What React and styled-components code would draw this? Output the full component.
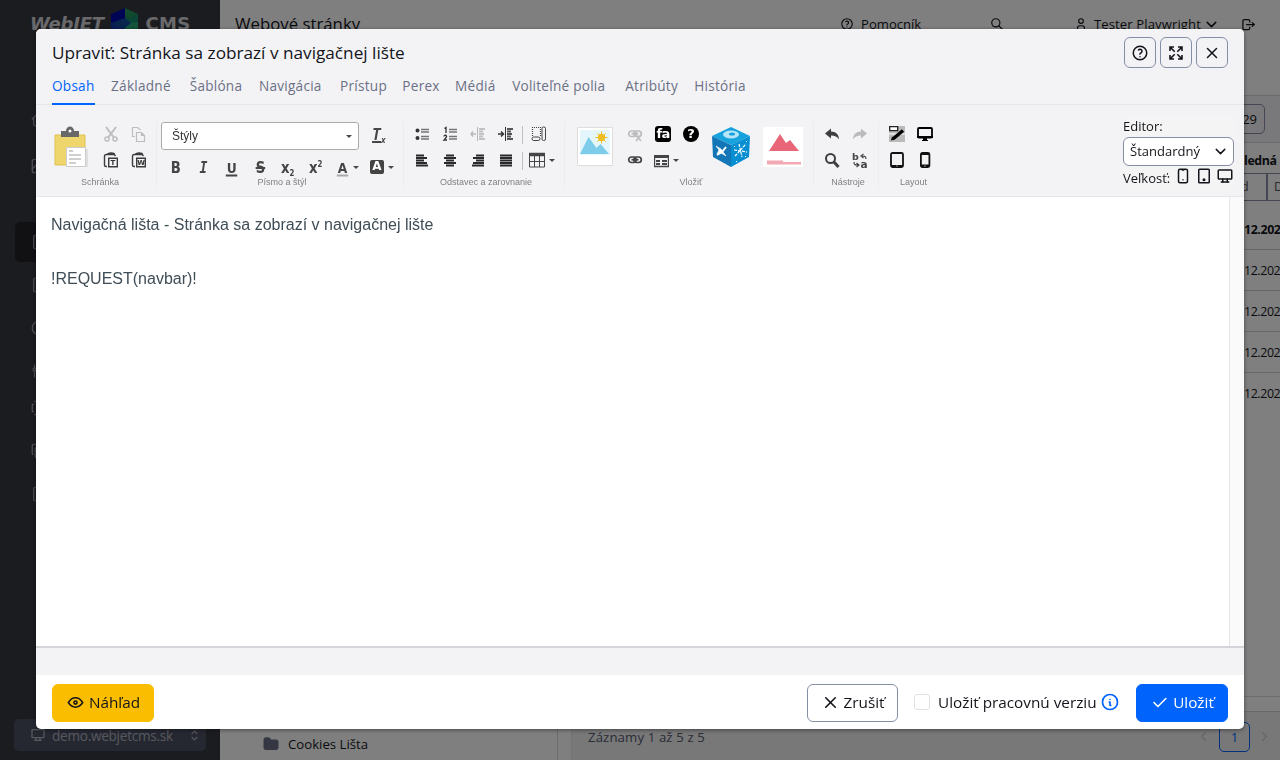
import React from 'react';
import styled, { createGlobalStyle, css } from 'styled-components';
import {
  TbHelp, TbSearch, TbUser, TbChevronDown, TbChevronLeft, TbChevronRight, TbLogout, TbHome, TbPhoto,
  TbFileText, TbDeviceTablet, TbDeviceMobile, TbDeviceDesktop, TbX, TbEye, TbCheck, TbInfoCircle,
  TbFolderFilled, TbSelector, TbForms, TbCopy, TbClock, TbAdjustments,
} from 'react-icons/tb';

const Global = createGlobalStyle`
  * { box-sizing: border-box; }
  body { margin: 0; overflow: hidden; background: #fff; color: #13151b;
    font-family: "Open Sans", "Noto Sans", sans-serif; font-size: 13.6px; }
  svg { display: block; flex: none; }
`;

const Page = styled.div`display: flex; width: 1280px; height: 760px; overflow: hidden;`;

const Sidebar = styled.aside`
  width: 220px; height: 760px; flex: none; background: #373941; color: #a3a6b3;
  display: flex; flex-direction: column;
`;
const Logo = styled.div`
  display: flex; height: 95px; padding: 8px 0 0 30px; align-items: flex-start; color: #d2d2d6;
`;
const LogoWord = styled.span`
  font: ${p => (p.$slant ? 'italic' : 'normal')} bold 18px/32px "DejaVu Sans", sans-serif;
  width: ${p => p.$w}px; white-space: nowrap; letter-spacing: ${p => p.$ls}px; margin-right: 8px;
`;
const SideList = styled.nav`flex: 1;`;
const SideItem = styled.div`
  display: flex; align-items: center; height: ${p => p.$h}px; margin: ${p => p.$mt}px 14px 0 15px; padding-left: 15px;
  border-radius: 5px; background: ${p => (p.$active ? '#222329' : 'transparent')};
`;
const Domain = styled.div`
  display: flex; align-items: center; height: 32px; margin: 0 14px 9px; padding: 0 4px 0 16px;
  background: #4c5163; border-radius: 5px; font-size: 13.6px; color: #aeb1bd;
  span { flex: 1; margin-left: 6px; letter-spacing: -.27px; }
`;

const Main = styled.main`flex: 1; display: flex; flex-direction: column; min-width: 0;`;
const TopBar = styled.header`
  display: flex; height: 95px; padding: 12px 24px 0 15px; align-items: flex-start; font-size: 13.1px; line-height: 24px;
  > * { height: 24px; display: flex; align-items: center; white-space: nowrap; }
`;
const Title = styled.h1`margin: 0; font-size: 16.8px; font-weight: 400; width: 605px;`;
const Help = styled.div`width: 150px; gap: 7px;`;
const Find = styled.div`width: 84px;`;
const Account = styled.div`gap: 6px; width: 167px; letter-spacing: .1px; svg:last-child { margin-left: -4px; }`;

const Columns = styled.div`display: flex; flex: 1;`;
const Tree = styled.section`
  width: 338px; flex: none; border-right: 1px solid #d8d8dc; display: flex; align-items: flex-end; padding: 0 0 4px 42px;
`;
const Folder = styled.div`display: flex; align-items: center; gap: 8px; height: 24px; font-size: 13.2px; svg { color: #6b7085; }`;
const Grid = styled.section`margin-left: 13px; flex: 1; min-width: 0; display: flex; flex-direction: column; border-left: 1px solid #e6e6ea;`;
const GridTools = styled.div`
  height: 48px; background: #f3f3f6; border: solid #d5d6dc; border-width: 1px 0; display: flex; justify-content: flex-end; padding: 8px 15px 0 0;
`;
const Count = styled.div`
  width: 40px; height: 30px; border: 1px solid #868ea5; border-radius: 5px; text-align: right; padding: 0 7px; line-height: 28px;
  font-size: 13px;
`;
const Cell = styled.div`
  height: ${p => p.$h || 41}px; padding: ${p => p.$pt || 0}px 0 0 672px; display: flex; align-items: center; white-space: nowrap; overflow: hidden;
  font-size: 12.4px; letter-spacing: -.4px; font-weight: ${p => (p.$bold ? 700 : 400)}; border-bottom: ${p => (p.$line ? '1px solid #cfd0d8' : '0')};
`;
const Filters = styled.div`display: flex; justify-content: flex-end; height: 28px;`;
const Filter = styled.div`
  width: ${p => p.$w}px; border: 1px solid #868ea5; border-right-width: ${p => (p.$last ? 0 : 1)}px; color: #555;
  padding-left: ${p => p.$pl}px; line-height: 26px; overflow: hidden; font-size: 12.5px;
`;
const Spacer = styled.div`flex: 1;`;
const Rule = styled.div`height: 15px; border-top: 1px solid #d8d8dc;`;
const Pager = styled.div`
  height: 49px; background: #f0f0f3; border-top: 1px solid #cfd0d8; display: flex; align-items: center; padding: 1px 8px 0 16px;
  color: #555a6e; font-size: 13.2px; letter-spacing: .12px; span { flex: 1; } svg { color: #ccc; }
`;
const PageNo = styled.div`
  width: 31px; height: 30px; border: 1px solid #0063fb; border-radius: 5px; color: #0063fb; text-align: center; line-height: 28px; margin: 0 7px 0 8px;
`;

const Backdrop = styled.div`
  position: fixed; inset: 0; background: rgba(0,0,0,.5); padding: 29px 36px 31px; display: flex;
`;
const Modal = styled.div`
  flex: 1; background: #fff; border-radius: 5px; overflow: hidden; display: flex; flex-direction: column;
  box-shadow: 0 1px 4px rgba(0,0,0,.45);
`;
const Head = styled.div`
  height: 45px; background: #f3f3f6; padding: 8px 16px 0; display: flex; gap: 4px;
  h2 { flex: 1; margin: 0; font-size: 17.2px; font-weight: 400; line-height: 31px; white-space: nowrap; }
`;
const SquareButton = styled.button`
  width: 32px; height: 31px; padding: 0; display: flex; align-items: center; justify-content: center;
  border: 1px solid #868ea5; border-radius: 6px; background: transparent; color: #13151b;
`;
const Tabs = styled.div`
  height: 31px; background: #f3f3f6; display: flex; padding: 0 16px; border-bottom: 1px solid #e6e6ea;
`;
const Tab = styled.div`
  width: ${p => p.$w}px; margin-right: 16.1px; line-height: 24px; height: 31px; white-space: nowrap; letter-spacing: .25px;
  color: ${p => (p.$on ? '#0063fb' : '#6b7085')}; border-bottom: ${p => (p.$on ? '2px solid #0063fb' : '0')};
`;

const Toolbar = styled.div`
  height: 92px; background: #f3f3f6; border-bottom: 1px solid #e6e6ee; display: flex; padding: 16px 10px 0 8px;
`;
const Group = styled.div`
  width: ${p => p.$w}px; height: 66px; margin-right: 4px; border-right: ${p => (p.$end ? 0 : 1)}px solid #ededf0;
`;
const Tools = styled.div`display: flex; height: 52px; padding-left: ${p => p.$pl || 0}px;`;
const FontTools = styled.div`height: 52px; padding-top: 1px;`;
const Row = styled.div`display: flex; height: ${p => p.$h || 26}px; padding-left: ${p => p.$pl || 0}px;`;
const Tile = styled.div`width: 52px; height: 52px; display: flex; align-items: center; justify-content: center;`;
const Tool = styled.div`
  width: ${p => p.$w || 28}px; height: ${p => p.$h || 26}px; display: flex; align-items: center; justify-content: center;
  opacity: ${p => (p.$off ? .3 : 1)}; gap: 4px; color: #484848;
`;
const Caption = styled.div`
  font: 9px/18px "Liberation Sans", Arial, sans-serif; color: #808080; text-align: center; white-space: nowrap;
`;
const Bar = styled.div`width: 1px; height: 18px; margin: 5px 2px 0; background: #c0c0c4;`;
const StyleSelect = styled.div`
  width: 198px; height: 28px; border: 1px solid #aaa; border-radius: 3px; background: #fff; display: flex; align-items: center;
  justify-content: space-between; padding: 0 6px 0 10px; font: 12px "Liberation Sans", Arial, sans-serif; color: #333;
`;
const Caret = styled.i`width: 0; height: 0; border: solid transparent; border-width: 3px 3px 0; border-top-color: #484848;`;
const Glyph = styled.b`
  font: bold 15px/17px "DejaVu Sans", sans-serif; color: #454545; transform: translateY(${p => (p.$under ? 1.5 : 1)}px) scaleX(.88);
  ${p => p.$it && css`font-family: "DejaVu Sans Mono", monospace; font-style: italic;`}
  ${p => p.$under && css`border-bottom: 2px solid ${p.$under}; line-height: 13px; font-size: 14px; padding: 0 1px;`}
  ${p => p.$strike && css`text-decoration: line-through; text-decoration-thickness: 1.5px;`}
  ${p => p.$clear && css`text-decoration: underline; text-decoration-thickness: 2px; text-underline-offset: 1px; transform: none;`}
  sub, sup { font-size: 8px; line-height: 0; display: inline-block; }
  sup { vertical-align: 6px; } sub { vertical-align: -3px; }
`;
const Inverse = styled.b`
  width: ${p => p.$s}px; height: ${p => p.$s}px; border-radius: ${p => p.$r}px; background: ${p => p.$bg}; color: #fff;
  font: bold ${p => p.$f}px/${p => p.$s - 1}px "DejaVu Sans", sans-serif; text-align: center; letter-spacing: ${p => p.$ls || 0}px;
`;
const EditorBox = styled.div`
  width: 111px; height: 74px; margin: -5px 0 0 auto; background: #f4f4f4; font-size: 13px; line-height: 20px; white-space: nowrap;
`;
const EditorSelect = styled.div`
  width: 111px; height: 29px; margin-top: .5px; border: 1px solid #868ea5; border-radius: 6px; background: #fff; display: flex; align-items: center;
  justify-content: space-between; padding: 0 4px 0 6px; font-size: 13px;
`;
const Sizes = styled.div`display: flex; gap: 3px; height: 23px; line-height: 25px; font-size: 13px; span { width: 48px; } svg { margin-top: 1.5px; }`;

const Body = styled.div`display: flex; height: 449px;`;
const Content = styled.div`
  flex: 1; padding: 14px 15px; font: 16px/27px "Liberation Sans", Arial, sans-serif; color: #3f4d57; p { margin: 0 0 27px; }
`;
const Gutter = styled.div`width: 15px; background: #fafafa; border-left: 1px solid #e6e6e8;`;
const Status = styled.div`height: 29px; background: #f3f3f5; border-top: 2px solid #d4d5d8;`;
const Footer = styled.div`
  flex: 1; display: flex; padding: 8.5px 16px 0; font-size: 15.3px; line-height: 36px; white-space: nowrap;
`;
const Action = styled.button`
  width: ${p => p.$w}px; height: 38px; border: 1px solid ${p => p.$line}; background: ${p => p.$bg}; color: ${p => p.$c || '#13151b'};
  border-radius: 6px; font: inherit; line-height: 34px; padding: 0 0 1px; display: flex; align-items: center; justify-content: center; gap: 4px;
`;
const Check = styled.div`
  display: flex; align-items: center; height: 37px; margin: 0 16px; color: #13151b;
  i { width: 16px; height: 16px; border: 1px solid #dfe0e5; border-radius: 3px; margin-right: 8px; }
  span { width: 162px; } svg { color: #0063fb; }
`;

const Svg = ({ s = 16, w, h, children, ...rest }) => (
  <svg width={w || s} height={h || s} viewBox={`0 0 ${w || s} ${h || s}`} fill="none" {...rest}>{children}</svg>
);
const Expand = () => (
  <Svg s={16} stroke="currentColor" strokeWidth="1.600">
    <path d="M2 6V2h4M10 2h4v4M14 10v4h-4M6 14H2v-4M2 2l4.700 4.700M14 2L9.300 6.700M14 14L9.300 9.300M2 14l4.700-4.700" />
  </Svg>
);
const LogoMark = () => (
  <Svg w={28} h={36}>
    <path d="M14 0L0 6v9l14 5z" fill="#0008a8" /><path d="M14 0l13 6-8 5-5-3z" fill="#24955c" />
    <path d="M14 8l5 3 8-5v6l-7 4-6-2z" fill="#138f70" /><path d="M0 15l14-5 6 5-6 7-14-4z" fill="#104a9c" />
    <path d="M14 20l6-5 7-2v9l-13 8z" fill="#25a878" /><path d="M0 15l14 6v12L0 24z" fill="#153cad" />
  </Svg>
);
const Clipboard = () => (
  <Svg w={34} h={42}>
    <path d="M1 9h30v30H1z" fill="#eed66c" stroke="#dfc150" /><path d="M7 5h5c0-6 8-6 8 0h5v6H7z" fill="#686868" />
    <circle cx="16" cy="5" r="1.500" fill="#fff" /><path d="M12.500 21.500h19v19h-19z" fill="#fff" stroke="#ccc" />
    <path d="M15 25h4M15 29h12M15 33h12M15 37h7" stroke="#c0c0c0" strokeWidth="1.500" /><path d="M33 23v18" stroke="#ccc" />
  </Svg>
);
const Cut = () => (
  <Svg s={16} stroke="#444" strokeWidth="2"><path d="M3 1l7.500 10M13 1L5.500 11" /><circle cx="4" cy="13" r="2" strokeWidth="1.500" /><circle cx="12" cy="13" r="2" strokeWidth="1.500" /></Svg>
);
const Copy = () => (
  <Svg s={16} stroke="#444" strokeWidth="1.200"><path d="M4 10.500H1.500v-9h5l3 2.500" /><path d="M5.500 6.500h5l3 3v6h-8zM10.500 6.500v3h3" /></Svg>
);
const Paste = ({ letter }) => (
  <Svg s={16} stroke="#3c3c3c" strokeWidth="1.400">
    <path d="M4 2.500H3a1.500 1.500 0 00-1.500 1.500v9A1.500 1.500 0 003 14.500h1M11.500 3l1 1" /><path d="M4.500 2.500c0-2 7-2 7 0z" fill="#3c3c3c" />
    <path d="M5.700 6.200h8.600v8.600H5.700z" /><text x="10" y="13.300" fill="#333" stroke="none" fontSize="7" fontWeight="700" textAnchor="middle" fontFamily="DejaVu Sans">{letter}</text>
  </Svg>
);
const List = ({ num }) => (
  <Svg s={16}>
    <path d="M7 3.500h8M7 6h8M7 10.500h8M7 13h8" stroke="#777" strokeWidth="1.600" />
    {num ? <path d="M2.500 2.500L4 1.500V7M2 10.500c0-2 3-1.500 2.500.500L2 14h3" stroke="#333" strokeWidth="1.300" />
      : <path d="M1.500 4.500a2 2 0 104 0 2 2 0 00-4 0M1.500 12a2 2 0 104 0 2 2 0 00-4 0" fill="#333" />}
  </Svg>
);
const Indent = ({ out }) => (
  <Svg s={16} stroke="#333">
    <path d={out ? 'M1 8h5M3 5.500L1 8l2 2.500' : 'M0 8h5M3 5.500L5.500 8 3 10.500'} strokeWidth="1.500" /><path d="M7.500 1v14" />
    <path d="M9 3h6M9 5.500h4M9 8h5M9 10.500h4M9 13h6" strokeWidth="2" stroke="#555" />
  </Svg>
);
const LINES = {
  left: 'M2 3.500h8M2 6h11M2 8.500h8M2 11h11M2 13.500h12',
  center: 'M4 3.500h8M2 6h12M4 8.500h8M2 11h12M4 13.500h8',
  right: 'M6 3.500h8M3 6h11M6 8.500h8M3 11h11M2 13.500h12',
  full: 'M2 3.500h12M2 6h12M2 8.500h12M2 11h12M2 13.500h12',
};
const Align = ({ to }) => <Svg s={16}><path d={LINES[to]} stroke="#292929" strokeWidth="1.800" /></Svg>;
const Frame = () => (
  <Svg s={16} stroke="#444"><path d="M1.500 1v9M9.500 1v9M1 1.500h9" strokeDasharray="1 1" strokeWidth="1.200" /><rect x="1" y="11" width="8" height="3.500" rx="1.700" /><rect x="11" y="1" width="3.500" height="13.500" rx="1.500" /></Svg>
);
const Table = () => (
  <Svg s={16} stroke="#444"><path d="M0 2.500h16" strokeWidth="3.500" /><path d="M.5 4v11h15V4M.5 9.500h15M5.500 4v11M10.500 4v11" /></Svg>
);
const Picture = () => (
  <Svg w={36} h={40}>
    <path d="M.5.5h35v38H.5z" fill="#fff" stroke="#ddd" /><path d="M3 3h30v25H3z" fill="#e4f6fc" />
    <path d="M3 27l8.500-17 8 11 4-4L32 27z" fill="#7dcce9" /><circle cx="24.500" cy="10.500" r="3.700" fill="#f0be22" />
    <path d="M24.500 4.500v12M18.500 10.500h12M20.300 6.300l8.400 8.400M28.700 6.300l-8.400 8.400" stroke="#f0be22" />
  </Svg>
);
const Chain = ({ cut }) => (
  <Svg s={16} stroke="#444" strokeWidth="1.700"><rect x="1.700" y="5" width="7.500" height="5.500" rx="2.700" /><rect x="6.800" y="5" width="7.500" height="5.500" rx="2.700" /><path d="M4.500 7.700h7" />{cut && <path d="M9 9l5 6M14 9l-5 6" />}</Svg>
);
const FormIcon = () => (
  <Svg s={15} stroke="#444"><path d="M0 3.500h15" strokeWidth="3" /><path d="M.5 3v10.500h14V3" strokeWidth="1.300" /><path d="M2 8h4M2 11h4M8 8h5M8 11h5" strokeWidth="2" /></Svg>
);
const Box = () => (
  <Svg w={40} h={42}>
    <path d="M20 1l19 9-19 9L1 10z" fill="#16a2dd" /><path d="M1 10l19 9v22L2 31z" fill="#1377b7" /><path d="M39 10l-19 9v22l18-10z" fill="#078fd2" />
    <ellipse cx="20" cy="8.500" rx="8" ry="4" fill="#b5e5f7" /><ellipse cx="21" cy="8" rx="3" ry="1.500" fill="#16a2dd" />
    <path d="M5 20l5 3 5 7-5-3-4 1 2-4z" fill="#fff" stroke="#fff" strokeWidth=".6" /><path d="M15 21l-4 5-5 3" stroke="#fff" strokeWidth="2" />
    <path d="M24 30l11-12M28 18l3 13M23 24l13 2" stroke="#fff" strokeWidth="1.200" strokeDasharray="3 1" /><path d="M23 20l1 1M35 15l1 1M25 35l1 1M34 31l1-1" stroke="#fff" />
  </Svg>
);
const Banner = () => (
  <Svg s={40}><path d="M0 0h40v40H0z" fill="#fff" /><path d="M6 24L17 7l6 9 4-3 9 11z" fill="#e96679" /><path d="M4 35.500h34" stroke="#f2a9b4" strokeWidth="4" /><path d="M20 34h19" stroke="#fff" strokeWidth="2" /></Svg>
);
const Undo = ({ flip }) => (
  <Svg s={16}><path transform={flip ? 'translate(16 0) scale(-1 1)' : undefined} d="M1 7.500l6-5v3c5 0 8 3 8 8-2-3-4-4-8-4v3z" fill="#3e3e3e" /></Svg>
);
const Lens = () => <Svg s={16} stroke="#3f3f3f"><circle cx="6.500" cy="6.500" r="4.500" strokeWidth="2" /><path d="M10 10l4.500 5" strokeWidth="3" /></Svg>;
const Replace = () => (
  <Svg s={16} stroke="#444">
    <g fill="#444" stroke="none" fontFamily="DejaVu Sans" fontWeight="700"><text x="0" y="8" fontSize="9.5">b</text><text x="8.500" y="15.500" fontSize="10.5">a</text></g>
    <path d="M14 7c0-3-2-3-4-3M11.500 2l-2.500 2 2.500 2M2 10c0 3 1 3 4 3M4.500 11L7 13l-2.500 2" strokeWidth="1.200" />
  </Svg>
);
const Edit = () => (
  <Svg s={16}><path d="M0 0h16v16H0z" fill="#bbb" /><path d="M0 8h16" stroke="#ddd" strokeWidth="2" /><path d="M.7.7h8v4h-8z" fill="#fff" stroke="#222" strokeWidth="1.300" /><path d="M4.500 12.500L14 4.500" stroke="#000" strokeWidth="3.500" /><path d="M2 14.500l1-4 3 3z" fill="#000" /></Svg>
);
const Screen = () => <Svg s={16}><rect x="1" y="2" width="14" height="9.500" rx="1" stroke="#000" strokeWidth="1.800" /><path d="M0 10h16v2H0zM6 12h4v2h1v1H5v-1h1z" fill="#000" /></Svg>;
const Slate = ({ small }) => (
  <Svg s={16}><rect x={small ? 3.900 : 2} y="1" width={small ? 8.500 : 12} height="14" rx="1.500" stroke="#111" strokeWidth="1.800" /><path d={small ? 'M4 12.500h8V15H4zM4 1h8v2H4z' : 'M2 13h12v2H2z'} fill="#111" /><path d="M7.500 14h1" stroke="#fff" /></Svg>
);

const SIDE = [
  [TbHome, 4, 40], [TbPhoto, 7, 40], [TbFileText, 36, 40, true], [TbDeviceTablet, 3, 40], [TbClock, 3, 40],
  [TbAdjustments, 3, 40], [TbForms, -1, 36], [TbCopy, 5, 40], [TbFileText, 3, 40],
];
const TABS = [
  ['Obsah', 43], ['Základné', 62.5], ['Šablóna', 53.2], ['Navigácia', 65], ['Prístup', 46.2], ['Perex', 36.6], ['Médiá', 41], ['Voliteľné polia', 97], ['Atribúty', 53], ['História', 55],
];

export default function App() {
  return (
    <>
      <Global />
      <Page>
        <Sidebar>
          <Logo>
            <LogoWord $slant $w={73} $ls={-0.2}>WebJET</LogoWord><LogoMark />
            <LogoWord $w={44} $ls={0.3}>&nbsp;CMS</LogoWord>
          </Logo>
          <SideList>
            {SIDE.map(([I, mt, h, active], i) => <SideItem key={i} $mt={mt} $h={h} $active={active}><I size={18} strokeWidth={1.6} /></SideItem>)}
          </SideList>
          <Domain><TbDeviceDesktop size={16} /><span>demo.webjetcms.sk</span><TbSelector size={15} /></Domain>
        </Sidebar>
        <Main>
          <TopBar>
            <Title>Webové stránky</Title>
            <Help><TbHelp size={14} />Pomocník</Help>
            <Find><TbSearch size={14} /></Find>
            <Account><TbUser size={14} />Tester Playwright<TbChevronDown size={17} /></Account>
            <div><TbLogout size={15} /></div>
          </TopBar>
          <Columns>
            <Tree><Folder><TbFolderFilled size={18} />Cookies Lišta</Folder></Tree>
            <Grid>
              <GridTools><Count>29</Count></GridTools>
              <Cell $h={30} $bold $pt={4}>ledná</Cell>
              <Filters><Filter $w={41} $pl={14}>d</Filter><Filter $w={13} $pl={6} $last>D</Filter></Filters>
              <Cell $h={49} $bold $line $pt={9}>12.202</Cell>
              <Cell $line>12.202</Cell><Cell $line>12.202</Cell><Cell $line>12.202</Cell><Cell>12.202</Cell>
              <Spacer /><Rule />
              <Pager><span>Záznamy 1 až 5 z 5</span><TbChevronLeft size={15} /><PageNo>1</PageNo><TbChevronRight size={15} /></Pager>
            </Grid>
          </Columns>
        </Main>
      </Page>
      <Backdrop>
        <Modal>
          <Head>
            <h2>Upraviť: Stránka sa zobrazí v navigačnej lište</h2>
            <SquareButton><TbHelp size={18} /></SquareButton>
            <SquareButton><Expand /></SquareButton>
            <SquareButton><TbX size={18} /></SquareButton>
          </Head>
          <Tabs>{TABS.map(([t, w], i) => <Tab key={t} $w={w} $on={i === 0}>{t}</Tab>)}</Tabs>
          <Toolbar>
            <Group $w={113}>
              <Tools $pl={1}>
                <Tile><Clipboard /></Tile>
                <div>
                  <Row><Tool $off><Cut /></Tool><Tool $off><Copy /></Tool></Row>
                  <Row><Tool><Paste letter="T" /></Tool><Tool><Paste letter="W" /></Tool></Row>
                </div>
              </Tools>
              <Caption>Schránka</Caption>
            </Group>
            <Group $w={243}>
              <FontTools>
                <Row $h={31}><StyleSelect>Štýly<Caret /></StyleSelect><Tool $w={40} $h={26}><Glyph $it $clear>T<sub>x</sub></Glyph></Tool></Row>
                <Row $h={28} $pl={1}>
                  <Tool $h={28}><Glyph>B</Glyph></Tool>
                  <Tool $h={28}><Glyph $it>I</Glyph></Tool>
                  <Tool $h={28}><Glyph $under="#454545">U</Glyph></Tool>
                  <Tool $h={28}><Glyph $strike>S</Glyph></Tool>
                  <Tool $h={28}><Glyph>x<sub>2</sub></Glyph></Tool>
                  <Tool $h={28}><Glyph>x<sup>2</sup></Glyph></Tool>
                  <Tool $w={35} $h={28}><Glyph $under="#aaa">A</Glyph><Caret /></Tool>
                  <Tool $w={34} $h={28}><Inverse $s={14} $r={2} $f={12} $bg="#444">A</Inverse><Caret /></Tool>
                </Row>
              </FontTools>
              <Caption>Písmo a štýl</Caption>
            </Group>
            <Group $w={157}>
              <Tools>
                <div>
                  <Row><Tool><List /></Tool><Tool><List num /></Tool><Tool $off><Indent out /></Tool><Tool><Indent /></Tool><Bar /><Tool><Frame /></Tool></Row>
                  <Row><Tool><Align to="left" /></Tool><Tool><Align to="center" /></Tool><Tool><Align to="right" /></Tool><Tool><Align to="full" /></Tool><Bar /><Tool $w={34}><Table /><Caret /></Tool></Row>
                </div>
              </Tools>
              <Caption>Odstavec a zarovnanie</Caption>
            </Group>
            <Group $w={245}>
              <Tools>
                <Tile><Picture /></Tile>
                <div>
                  <Row><Tool $off><Chain cut /></Tool><Tool><Inverse $s={16} $r={3} $f={13} $bg="#000" $ls={-0.8}>fa</Inverse></Tool><Tool><Inverse $s={16} $r={8} $f={13} $bg="#000">?</Inverse></Tool></Row>
                  <Row><Tool><Chain /></Tool><Tool $w={35}><FormIcon /><Caret /></Tool></Row>
                </div>
                <Tile><Box /></Tile><Tile><Banner /></Tile>
              </Tools>
              <Caption>Vložiť</Caption>
            </Group>
            <Group $w={61}>
              <Tools><div>
                <Row><Tool><Undo /></Tool><Tool $off><Undo flip /></Tool></Row>
                <Row><Tool><Lens /></Tool><Tool><Replace /></Tool></Row>
              </div></Tools>
              <Caption>Nástroje</Caption>
            </Group>
            <Group $w={61} $end>
              <Tools><div>
                <Row><Tool><Edit /></Tool><Tool><Screen /></Tool></Row>
                <Row><Tool><Slate /></Tool><Tool><Slate small /></Tool></Row>
              </div></Tools>
              <Caption>Layout</Caption>
            </Group>
            <EditorBox>
              Editor:
              <EditorSelect>Štandardný<TbChevronDown size={17} /></EditorSelect>
              <Sizes><span>Veľkosť:</span><TbDeviceMobile size={18} /><TbDeviceTablet size={18} /><TbDeviceDesktop size={18} /></Sizes>
            </EditorBox>
          </Toolbar>
          <Body>
            <Content><p>Navigačná lišta - Stránka sa zobrazí v navigačnej lište</p><p>!REQUEST(navbar)!</p></Content>
            <Gutter />
          </Body>
          <Status />
          <Footer>
            <Action $w={102} $bg="#fbbd00" $line="#fbbd00"><TbEye size={19} />Náhľad</Action>
            <Spacer />
            <Action $w={91} $bg="#fff" $line="#868ea5"><TbX size={19} />Zrušiť</Action>
            <Check><i /><span>Uložiť pracovnú verziu</span><TbInfoCircle size={20} /></Check>
            <Action $w={92} $bg="#0063fb" $line="#0063fb" $c="#fff"><TbCheck size={19} />Uložiť</Action>
          </Footer>
        </Modal>
      </Backdrop>
    </>
  );
}
